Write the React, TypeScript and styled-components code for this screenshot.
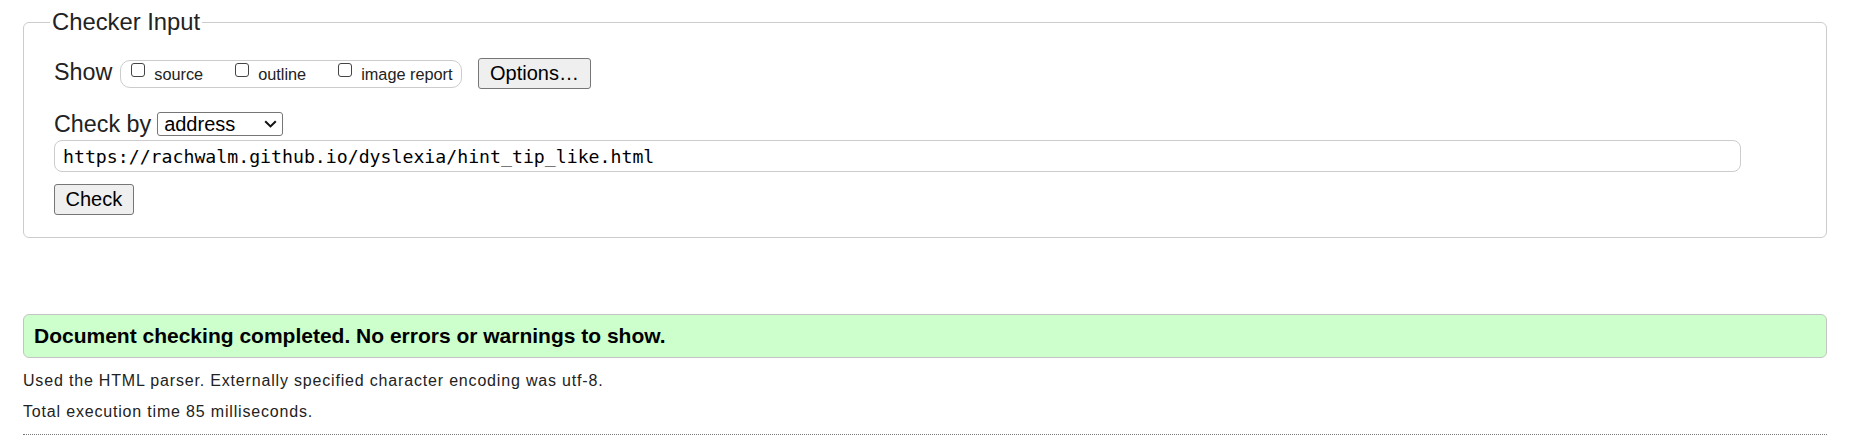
import React from "react";
import styled, { createGlobalStyle } from "styled-components";

const GlobalStyle = createGlobalStyle`
  html, body { margin: 0; padding: 0; background: #fff; }
  body {
    font-family: "Liberation Sans", Arial, sans-serif;
    color: #222;
    font-size: 16px;
  }
  * { box-sizing: border-box; }
`;

const Page = styled.main`
  padding: 8px 37px 0 23px;
`;

const Form = styled.form`
  margin: 0;
`;

const Fieldset = styled.fieldset`
  margin: 0;
  border: 1px solid #ccc;
  border-radius: 6px;
  padding: 22px 85px 22px 30px;
  min-inline-size: 0;
`;

const Legend = styled.legend`
  font-size: 23.8px;
  line-height: 28px;
  padding: 0 2px;
  margin-left: -4px;
  color: #222;
`;

const Row = styled.div<{ $align?: string; $top?: number; $height?: number }>`
  display: flex;
  align-items: ${(p) => p.$align ?? "center"};
  margin-top: ${(p) => p.$top ?? 0}px;
  ${(p) => (p.$height ? `height: ${p.$height}px;` : "")}
`;

const FieldLabel = styled.span`
  font-size: 23.3px;
  line-height: 28px;
  color: #222;
`;

const CheckGroup = styled.span`
  display: inline-block;
  height: 28px;
  margin-left: 8px;
  padding: 0 8px 0 6px;
  border: 1px solid #ccc;
  border-radius: 10px;
  font-size: 16.3px;
  line-height: 18px;
  white-space: nowrap;
`;

const CheckLabel = styled.label`
  color: #222;
  & + & {
    margin-left: 28px;
  }
`;

const Checkbox = styled.input.attrs({ type: "checkbox" })`
  appearance: none;
  display: inline-block;
  width: 14px;
  height: 14px;
  margin: 2px 9px 3px 4px;
  vertical-align: baseline;
  border: 1px solid #444;
  border-radius: 3px;
  background: #fff;
`;

const Button = styled.button<{ $left?: number; $pad?: number }>`
  font-family: "Liberation Sans", Arial, sans-serif;
  font-size: 20px;
  line-height: 23px;
  height: 31px;
  padding: 0 ${(p) => p.$pad ?? 10.5}px;
  margin-left: ${(p) => p.$left ?? 0}px;
  border: 1px solid #767676;
  border-radius: 3px;
  background: #efefef;
  color: #000;
`;

const SelectWrap = styled.span`
  position: relative;
  display: inline-block;
  margin-left: 6px;
  width: 126px;
  height: 24px;
`;

const Select = styled.select`
  appearance: none;
  width: 100%;
  height: 100%;
  margin: 0;
  padding: 0 24px 0 6px;
  font-family: "Liberation Sans", Arial, sans-serif;
  font-size: 20px;
  line-height: 22px;
  color: #000;
  background: #fff;
  border: 1px solid #767676;
  border-radius: 3px;
`;

const Chevron = styled.svg`
  position: absolute;
  right: 6px;
  top: 8px;
  pointer-events: none;
`;

const UrlInput = styled.input`
  display: block;
  width: 100%;
  height: 32px;
  margin: 2px 0 0;
  padding: 0 8px;
  border: 1px solid #ccc;
  border-radius: 8px;
  font-family: "DejaVu Sans Mono", "Liberation Mono", monospace;
  font-size: 18.2px;
  color: #000;
  background: #fff;
`;

const Success = styled.p`
  margin: 76px 0 0;
  padding: 9px 10px;
  background: #ccffcc;
  border: 1px solid #c4c4c4;
  border-radius: 6px;
  font-weight: bold;
  font-size: 21px;
  line-height: 24px;
  color: #000;
`;

const Info = styled.p<{ $top: number }>`
  margin: ${(p) => p.$top}px 0 0;
  font-size: 16px;
  line-height: 18px;
  letter-spacing: 0.82px;
  color: #222;
`;

const Divider = styled.hr`
  margin: 13px 0 0;
  border: 0;
  border-top: 1px dotted #777;
  height: 0;
`;

export default function App() {
  return (
    <>
      <GlobalStyle />
      <Page>
        <Form onSubmit={(e) => e.preventDefault()}>
          <Fieldset>
            <Legend>Checker Input</Legend>
            <Row $align="baseline" $height={31}>
              <FieldLabel>Show</FieldLabel>
              <CheckGroup>
                <CheckLabel>
                  <Checkbox />
                  source
                </CheckLabel>
                <CheckLabel>
                  <Checkbox />
                  outline
                </CheckLabel>
                <CheckLabel>
                  <Checkbox />
                  image report
                </CheckLabel>
              </CheckGroup>
              <Button type="button" $left={16} $pad={11.5}>
                Options…
              </Button>
            </Row>
            <Row $top={21}>
              <FieldLabel>Check by</FieldLabel>
              <SelectWrap>
                <Select defaultValue="address">
                  <option value="address">address</option>
                  <option value="file">file upload</option>
                  <option value="text">text input</option>
                </Select>
                <Chevron width="13" height="8" viewBox="0 0 13 8">
                  <path
                    d="M1.2 1.2 L6.5 6.4 L11.8 1.2"
                    fill="none"
                    stroke="#111"
                    strokeWidth="2"
                  />
                </Chevron>
              </SelectWrap>
            </Row>
            <UrlInput
              type="url"
              defaultValue="https://rachwalm.github.io/dyslexia/hint_tip_like.html"
            />
            <Row $top={12}>
              <Button type="submit">Check</Button>
            </Row>
          </Fieldset>
        </Form>
        <Success>Document checking completed. No errors or warnings to show.</Success>
        <Info $top={14}>
          Used the HTML parser. Externally specified character encoding was utf-8.
        </Info>
        <Info $top={13}>Total execution time 85 milliseconds.</Info>
        <Divider />
      </Page>
    </>
  );
}
